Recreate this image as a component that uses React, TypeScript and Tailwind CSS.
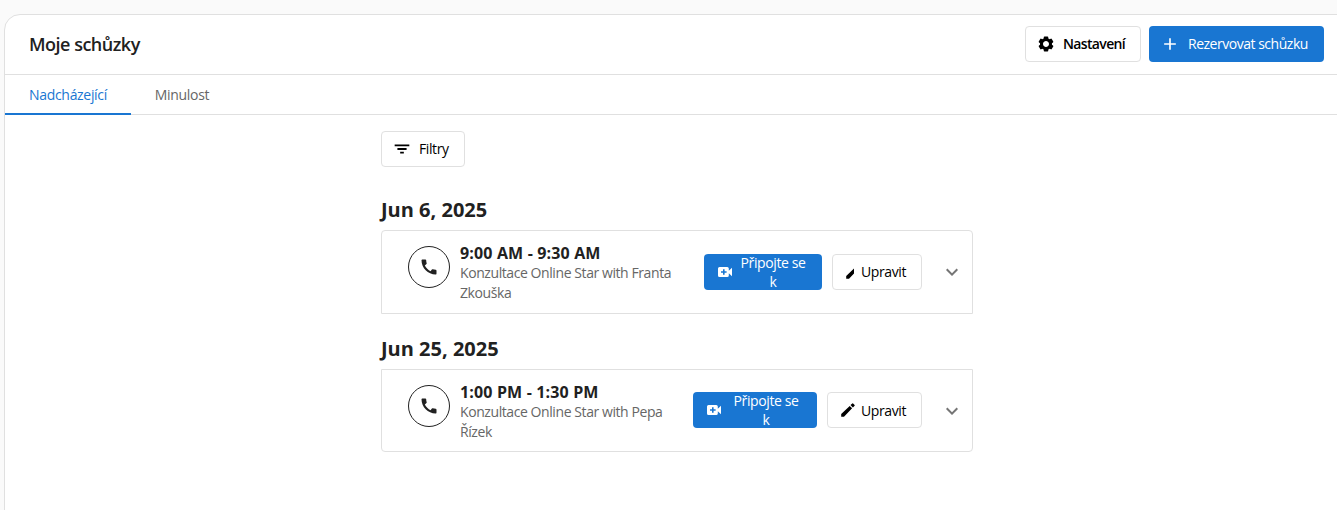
import React from 'react';
import { BiFilter, BiPlus, BiSolidCog } from 'react-icons/bi';
import { MdCall, MdExpandMore } from 'react-icons/md';

interface Appointment {
  date: string;
  time: string;
  title: string;
  cardClass: string;
  actionsClass: string;
  joinClass: string;
  joinTextClass: string;
  editClass: string;
  editIconClass: string;
  labelClass: string;
  chevronClass: string;
}

const appointments: Appointment[] = [
  {
    date: 'Jun 6, 2025',
    time: '9:00 AM - 9:30 AM',
    title: 'Konzultace Online Star with Franta Zkouška',
    cardClass: 'h-[84px] rounded-t',
    actionsClass: 'h-[82px]',
    joinClass: 'w-[118px] pl-[14px]',
    joinTextClass: 'ml-[7px] pb-px',
    editClass: 'w-[90px]',
    editIconClass: 'w-[8px]',
    labelClass: '',
    chevronClass: '',
  },
  {
    date: 'Jun 25, 2025',
    time: '1:00 PM - 1:30 PM',
    title: 'Konzultace Online Star with Pepa Řízek',
    cardClass: 'h-[83px] rounded-b',
    actionsClass: 'h-[80px]',
    joinClass: 'w-[124px] pl-[14px]',
    joinTextClass: 'ml-[11px]',
    editClass: 'w-[95px]',
    editIconClass: 'w-[14px]',
    labelClass: 'pt-0.5',
    chevronClass: 'mt-px',
  },
];

const outlineButton = 'flex h-9 shrink-0 items-center rounded border border-[#e0e0e0] bg-white text-sm text-black';

const PencilIcon: React.FC = () => (
  <svg className="h-[14px] w-[14px]" viewBox="0 0 14 14" fill="currentColor">
    <path d="M0.2 13.8V11L8.7 2.9L11.1 5.3L3 13.8ZM9.5 2.1L11.3 0.4Q11.7 0 12.1 0.4L13.6 1.9Q14 2.3 13.6 2.7L11.9 4.5Z" />
  </svg>
);

const VideoPlusIcon: React.FC = () => (
  <svg className="h-[10px] w-[14px] shrink-0" viewBox="0 0 14 10" fill="currentColor">
    <path
      fillRule="evenodd"
      d="M1.5 0H9.2Q10.8 0 10.8 1.5V3.7L14 0.8V9.2L10.8 6.3V8.5Q10.8 10 9.2 10H1.5Q0 10 0 8.5V1.5Q0 0 1.5 0ZM5 2.2V4.2H3V5.8H5V7.8H6.6V5.8H8.6V4.2H6.6V2.2Z"
    />
  </svg>
);

const AppointmentCard: React.FC<{ item: Appointment }> = ({ item }) => (
  <div className={`flex border border-[#e0e0e0] pl-[26px] ${item.cardClass}`}>
    <div className="mt-[15px] flex h-[42px] w-[42px] shrink-0 items-center justify-center rounded-full border border-[#212121]">
      <MdCall className="h-5 w-5 text-[#212121]" />
    </div>
    <div className="ml-[10px] mt-[12px] w-[216px] shrink-0">
      <p className="whitespace-nowrap text-base/5 font-bold tracking-[0.15px] text-[#212121]">{item.time}</p>
      <p className="text-sm/5 tracking-[-0.42px] text-[#666]">{item.title}</p>
    </div>
    <div className={`ml-auto flex items-center ${item.actionsClass}`}>
      <button className={`flex h-9 shrink-0 items-center rounded bg-[#1976d2] text-sm/[19px] text-white ${item.joinClass}`}>
        <VideoPlusIcon />
        <span className={`w-[68px] text-center tracking-[-0.4px] ${item.joinTextClass}`}>Připojte se k</span>
      </button>
      <button className={`${outlineButton} ml-[10px] justify-end pr-[15px] ${item.editClass}`}>
        <span className={`ml-[13px] mr-auto overflow-hidden ${item.editIconClass}`}>
          <PencilIcon />
        </span>
        <span className={`tracking-[-0.4px] ${item.labelClass}`}>Upravit</span>
      </button>
      <MdExpandMore className={`ml-[18px] mr-[8px] h-6 w-6 text-[#757575] ${item.chevronClass}`} />
    </div>
  </div>
);

export default function App() {
  return (
    <div className="h-[510px] overflow-hidden bg-[#fafafa] pl-1 pt-[14px] font-['Open_Sans','Noto_Sans',sans-serif]">
      <div className="h-[520px] w-[1349px] rounded-t-[16px] border border-[#e0e0e0] bg-white">
        <header className="flex h-[60px] items-center border-b border-[#e0e0e0] pb-0.5 pl-6 pr-[28px]">
          <h1 className="text-lg font-semibold tracking-[-0.5px] text-[#212121]">Moje schůzky</h1>
          <button className={`${outlineButton} ml-auto w-[116px] pl-[11px] font-semibold`}>
            <BiSolidCog className="h-[18px] w-[18px]" />
            <span className="ml-2 tracking-[-0.65px]">Nastavení</span>
          </button>
          <button className="ml-2 flex h-9 w-[175px] items-center rounded bg-[#1976d2] pl-[11px] text-sm text-white">
            <BiPlus className="h-5 w-5" />
            <span className="ml-[8px] tracking-[-0.48px]">Rezervovat schůzku</span>
          </button>
        </header>
        <nav className="flex h-10 border-b border-[#e0e0e0] text-sm">
          <button className="-mb-px w-[126px] border-b-2 border-[#1976d2] pt-0.5 tracking-[-0.32px] text-[#1976d2]">Nadcházející</button>
          <button className="w-[102px] pt-px tracking-[-0.3px] text-[#666]">Minulost</button>
        </nav>
        <main className="ml-[376px] w-[592px] pt-4">
          <button className={`${outlineButton} w-[84px] pl-[9px]`}>
            <BiFilter className="h-[22px] w-[22px]" />
            <span className="ml-1.5 tracking-[-0.4px]">Filtry</span>
          </button>
          <div className="mt-[28px] flex flex-col gap-[20px]">
            {appointments.map(item => (
              <section key={item.date}>
                <h2 className="mb-[5px] text-xl/[30px] font-bold text-[#212121]">{item.date}</h2>
                <AppointmentCard item={item} />
              </section>
            ))}
          </div>
        </main>
      </div>
    </div>
  );
}
